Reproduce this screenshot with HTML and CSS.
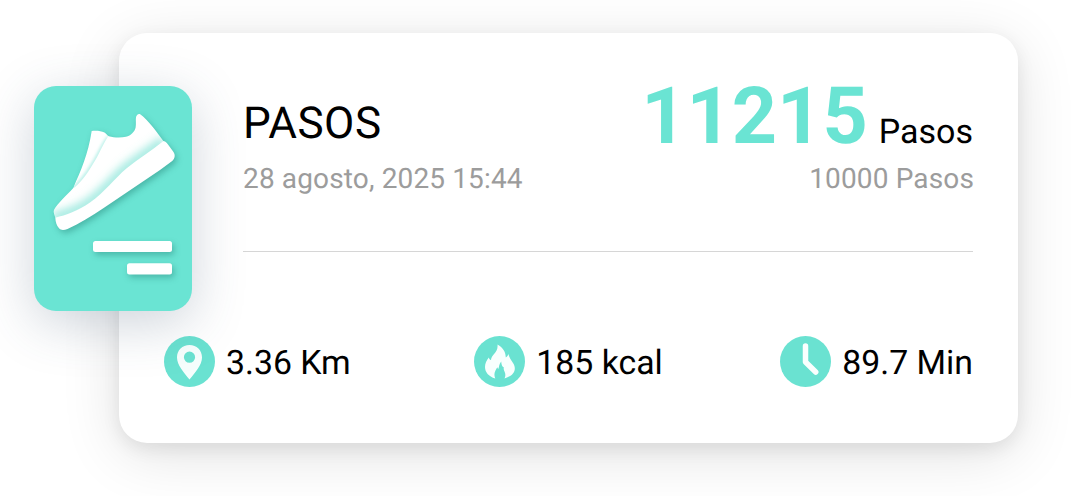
FILE: index.html
```html
<!DOCTYPE html>
<html lang="es">
<head>
<meta charset="utf-8">
<title>Pasos</title>
<link rel="stylesheet" href="styles.css">
</head>
<body>
<main class="card">
  <div class="tile">
    <svg class="tile-art" viewBox="34 86 158 225" aria-hidden="true">
      <defs>
        <clipPath id="upper"><path d="M91.7 131C97 130.6 101 131 104.500 132.600C106.500 133.600 107 135.600 108.800 136.300C114 137.800 121 138 126 136.800C131 135.500 134.500 132 135.600 127.500C136.300 124 135.500 120 136 117.300C136.500 114.800 138.500 113.300 140.500 114.500C147 119 157 132 163.500 141C151 151 138 159 126.700 168.300C114 179 105 192 90 202.500C78 211 66 215 55.300 217.700C54.500 214 53.200 212 54.200 209.500C58 203 66 196 73.300 188C80 173 86 158 91.700 131Z"/></clipPath>
        <clipPath id="tongue"><path d="M91.700 131C97 130 103 131 108.300 136.300C103 144 99 155 93 164C87 174 80 184 73.300 188.300C82 171 87 156 91.700 131Z"/></clipPath>
        <filter id="soft" x="-20%" y="-20%" width="140%" height="140%"><feGaussianBlur stdDeviation="4"/></filter>
        <filter id="fine" x="-20%" y="-20%" width="140%" height="140%"><feGaussianBlur stdDeviation="1.800"/></filter>
        <filter id="drop" x="-20%" y="-20%" width="150%" height="180%" color-interpolation-filters="sRGB"><feDropShadow dx="2" dy="3" stdDeviation="3" flood-color="#166b60" flood-opacity=".38"/></filter>
      </defs>
      <g filter="url(#drop)">
        <path fill="#fff" d="M91.700 131C97 130.600 101 131 104.500 132.600C106.500 133.600 107 135.600 108.800 136.300C114 137.800 121 138 126 136.800C131 135.500 134.500 132 135.600 127.500C136.300 124 135.500 120 136 117.300C136.500 114.800 138.500 113.300 140.500 114.500C147 119 157 132 163.300 141C166 141.500 167 143 168 144.500L173.500 152C175.500 155 175 158.500 172.200 161L160 170L103.300 208.300C91 216.500 79 224 67.500 229C64 230.300 61 230.500 59 228.300C56.500 225.500 55.500 222 55.300 217.700C54.500 214 53 212 54.200 209.500C58 203 66 196 73.300 188C81 170 88 155 91.700 131Z"/>
        <g clip-path="url(#upper)"><path d="M164 141C151 151 138 159 126.700 168.300C114 179 105 192 90 202.500C78 211 66 215 53 218" fill="none" stroke="#62ddcc" stroke-opacity=".58" stroke-width="11" filter="url(#soft)"/></g>
        <g clip-path="url(#tongue)"><path d="M109 137C103 144 99 155 93 164C87 174 80 184 72 189" fill="none" stroke="#62ddcc" stroke-opacity=".42" stroke-width="4" filter="url(#fine)"/></g>
      </g>
      <g fill="#fff" filter="url(#drop)"><rect x="93" y="241" width="79" height="11" rx="2.500"/><rect x="127" y="263.200" width="45" height="11.400" rx="2.500"/></g>
    </svg>
  </div>
  <header class="summary">
    <div class="activity">
      <h1 class="title">PASOS</h1>
      <p class="note">28 agosto, 2025 15:44</p>
    </div>
    <div class="result">
      <p class="total"><strong class="count">11215</strong><span class="unit">Pasos</span></p>
      <p class="note goal">10000 Pasos</p>
    </div>
  </header>
  <section class="metrics">
    <div class="metric">
      <svg class="icon" viewBox="0 0 51 51" aria-hidden="true"><circle cx="25.500" cy="25.500" r="25.500" fill="#6ae2d1"/><path fill="#f6fefd" fill-rule="evenodd" d="M25.500 9C18.300 9 13 14.300 13 21.400C13 29 20 36.500 25.500 43.500C31 36.500 38 29 38 21.400C38 14.300 32.700 9 25.500 9ZM25.500 15.600A5.600 5.600 0 1 1 25.500 26.800A5.600 5.600 0 0 1 25.500 15.600Z"/></svg>
      <span class="value">3.36 Km</span>
    </div>
    <div class="metric energy">
      <svg class="icon" viewBox="0 0 51 51" aria-hidden="true"><circle cx="25.500" cy="25.500" r="25.500" fill="#6ae2d1"/><path fill="#f8fffe" d="M23.500 8.500C29 12 31.500 15 31.800 21.500C33.200 20.800 34 19.500 34.400 18C35.300 21.500 37 24 39 27C43 33 40.500 39.500 30.500 42.500C31.800 40 31.500 37.500 30.500 35.500C29.700 33.800 29.500 32.500 29.800 31.300C28.300 31 27.400 28.500 27.200 25.500C25 28 25.300 30.500 24.300 33C23.800 32.500 23.500 32 23.400 31.200C21 34.500 19.300 38.500 21.300 42.500C14.500 40.500 11 36 11 31C11 27.500 12.500 24.500 14.800 21.500C15.200 23 15.800 23.700 17 24C17 19 24.500 16.500 23.500 8.500Z"/></svg>
      <span class="value">185 kcal</span>
    </div>
    <div class="metric">
      <svg class="icon" viewBox="0 0 51 51" aria-hidden="true"><circle cx="25.500" cy="25.500" r="25.500" fill="#6ae2d1"/><path d="M25.500 9.900V26L35.700 36" fill="none" stroke="#fafffe" stroke-width="5.500" stroke-linecap="round" stroke-linejoin="round"/></svg>
      <span class="value">89.7 Min</span>
    </div>
  </section>
</main>
</body>
</html>
```
FILE: styles.css
```css
* { box-sizing: border-box; }
body {
  margin: 0;
  padding: 33px 62px 53px 119px;
  height: 496px;
  overflow: hidden;
  background: #fff;
  color: #000;
  font-family: Roboto, "Liberation Sans", sans-serif;
  text-rendering: geometricPrecision;
}
h1, p { margin: 0; font-weight: 400; }
.card {
  position: relative;
  width: 899px;
  height: 410px;
  padding: 48px 45px 56px;
  border-radius: 28px;
  background: #fff;
  box-shadow: 0 11px 60px rgba(0, 0, 0, .12), 0 6px 18px rgba(0, 0, 0, .08);
  display: flex;
  flex-direction: column;
  justify-content: space-between;
}
.tile {
  position: absolute;
  left: -85px;
  top: 53px;
  width: 158px;
  height: 225px;
  border-radius: 22px;
  background: #6ae4d3;
  box-shadow: 0 12px 52px rgba(60, 85, 110, .25);
}
.tile-art { display: block; width: 100%; height: 100%; }
.summary {
  display: flex;
  justify-content: space-between;
  height: 171px;
  margin-left: 79px;
  border-bottom: 1px solid #d6d6d6;
}
.activity { padding-top: 16px; }
.title { font-size: 44px; line-height: 52px; letter-spacing: .5px; }
.note {
  margin-top: 13px;
  font-size: 28px;
  line-height: 34px;
  letter-spacing: .14px;
  color: #9c9c9c;
}
.result { text-align: right; }
.total { display: flex; align-items: baseline; justify-content: flex-end; gap: 11px; padding-top: 1px; line-height: 70px; }
.count { font-size: 79px; font-weight: 700; color: #6ae4d3; }
.unit { font-size: 34px; }
.goal { margin: -5px -1px 0 0; }
.metrics { display: flex; justify-content: space-between; }
.metric { display: flex; align-items: center; gap: 11px; }
.energy { margin-left: 6px; }
.icon { width: 51px; height: 51px; flex: none; }
.value { padding-top: 3px; margin-bottom: -2px; font-size: 33.8px; line-height: 50px; }
```
